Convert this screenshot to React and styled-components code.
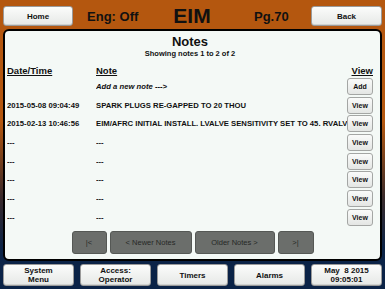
import React from "react";
import styled, { createGlobalStyle } from "styled-components";

const GlobalStyle = createGlobalStyle`
  * {
    margin: 0;
    padding: 0;
    box-sizing: border-box;
  }
  body {
    width: 385px;
    height: 289px;
    overflow: hidden;
    font-family: "Liberation Sans", Arial, sans-serif;
    background: linear-gradient(#b4570f 0%, #b4570f 42%, #3a2a2a 68%, #0b2347 86%, #0b2347 100%);
  }
`;

const Screen = styled.div`
  width: 385px;
  height: 289px;
  display: flex;
  flex-direction: column;
`;

const TopBar = styled.div`
  height: 29px;
  padding: 4px 3px 5px 3px;
  display: grid;
  grid-template-columns: 70px 1fr 1fr 1fr 71px;
  align-items: center;
`;

const LightButton = styled.button`
  height: ${(p) => p.$h || 20}px;
  border: 1px solid #9a9a9a;
  border-radius: 3px;
  background: linear-gradient(#fbfcfb, #e6e8e6);
  box-shadow: inset 0 -1px 0 #d0d2d0;
  font-family: "Liberation Sans", Arial, sans-serif;
  font-weight: bold;
  font-size: 8px;
  line-height: 9px;
  color: #111;
  text-align: center;
`;

const HeadText = styled.div`
  text-align: center;
  font-weight: bold;
  font-size: ${(p) => p.$size}px;
  color: #111;
`;

const Panel = styled.div`
  margin: 0 3px;
  height: 232px;
  border: 2px solid #000;
  border-radius: 6px;
  background: #f4f9f6;
  display: flex;
  flex-direction: column;
  padding: 3px 7px 0 2px;
`;

const Title = styled.div`
  text-align: center;
  font-weight: bold;
  font-size: 13px;
  line-height: 15px;
  color: #111;
`;

const Sub = styled.div`
  text-align: center;
  font-weight: bold;
  font-size: 7.5px;
  line-height: 9px;
  color: #111;
`;

const Row = styled.div`
  display: grid;
  grid-template-columns: 89px minmax(0, 1fr) 26px;
  align-items: center;
  height: ${(p) => p.$h || 18.7}px;
  font-size: 7.7px;
  font-weight: bold;
  color: #111;
`;

const HeadCell = styled.div`
  font-size: 9.5px;
  font-weight: bold;
  text-decoration: underline;
  text-align: ${(p) => (p.$right ? "right" : "left")};
  padding-top: 5px;
  color: #111;
`;

const Cell = styled.div`
  white-space: nowrap;
  overflow: hidden;
  font-style: ${(p) => (p.$italic ? "italic" : "normal")};
  padding-right: 2px;
`;

const SmallButton = styled.button`
  width: 26px;
  height: 17px;
  border: 1px solid #a4a6a4;
  border-radius: 3px;
  background: linear-gradient(#fafbfa, #e4e6e4);
  font-family: "Liberation Sans", Arial, sans-serif;
  font-weight: bold;
  font-size: 7px;
  color: #111;
`;

const Pager = styled.div`
  display: flex;
  justify-content: center;
  gap: 3px;
  margin-top: 4px;
  padding-left: 5px;
`;

const PageButton = styled.button`
  width: ${(p) => p.$w}px;
  height: 23px;
  border: 1px solid #555855;
  border-radius: 3px;
  background: #6b6e6b;
  font-family: "Liberation Sans", Arial, sans-serif;
  font-size: 7.5px;
  color: #262826;
`;

const BottomBar = styled.div`
  margin-top: 3px;
  padding: 0 3px;
  display: grid;
  grid-template-columns: repeat(5, 71px);
  justify-content: space-between;
`;

const rows = [
  ["2015-05-08 09:04:49", "SPARK PLUGS RE-GAPPED TO 20 THOU"],
  ["2015-02-13 10:46:56", "EIM/AFRC INITIAL INSTALL. LVALVE SENSITIVITY SET TO 45. RVALVE SENSITIVITY SET TO 45."],
  ["---", "---"],
  ["---", "---"],
  ["---", "---"],
  ["---", "---"],
  ["---", "---"],
];

export default function App() {
  return (
    <Screen>
      <GlobalStyle />
      <TopBar>
        <LightButton>Home</LightButton>
        <HeadText $size={13}>Eng: Off</HeadText>
        <HeadText $size={21}>EIM</HeadText>
        <HeadText $size={13}>Pg.70</HeadText>
        <LightButton>Back</LightButton>
      </TopBar>
      <Panel>
        <Title>Notes</Title>
        <Sub>Showing notes 1 to 2 of 2</Sub>
        <Row $h={19}>
          <HeadCell>Date/Time</HeadCell>
          <HeadCell>Note</HeadCell>
          <HeadCell $right>View</HeadCell>
        </Row>
        <Row>
          <Cell />
          <Cell $italic>Add a new note ---&gt;</Cell>
          <SmallButton>Add</SmallButton>
        </Row>
        {rows.map((r, i) => (
          <Row key={i}>
            <Cell>{r[0]}</Cell>
            <Cell>{r[1]}</Cell>
            <SmallButton>View</SmallButton>
          </Row>
        ))}
        <Pager>
          <PageButton $w={35}>|&lt;</PageButton>
          <PageButton $w={82}>&lt; Newer Notes</PageButton>
          <PageButton $w={80}>Older Notes &gt;</PageButton>
          <PageButton $w={36}>&gt;|</PageButton>
        </Pager>
      </Panel>
      <BottomBar>
        <LightButton $h={22}>System<br />Menu</LightButton>
        <LightButton $h={22}>Access:<br />Operator</LightButton>
        <LightButton $h={22}>Timers</LightButton>
        <LightButton $h={22}>Alarms</LightButton>
        <LightButton $h={22}>May &nbsp;8 2015<br />09:05:01</LightButton>
      </BottomBar>
    </Screen>
  );
}
